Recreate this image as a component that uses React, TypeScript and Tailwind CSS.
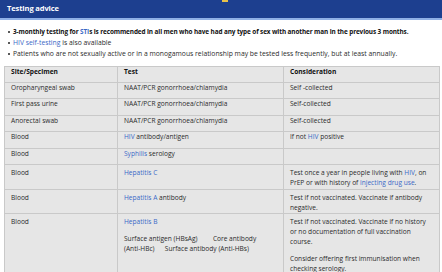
import React from "react";

const L = ({ children }: { children: React.ReactNode }) => (
  <span className="text-[#3b69c6]">{children}</span>
);

const Cell = ({ children, className = "" }: { children?: React.ReactNode; className?: string }) => (
  <td className={`border border-[#c9c9c9] px-[6px] align-top ${className}`}>{children}</td>
);

export default function App() {
  return (
    <div className="w-[442px] h-[272px] overflow-hidden bg-white text-[#2b2b2b]" style={{ fontFamily: '"Open Sans", "Noto Sans", sans-serif' }}>
      <div className="h-[20px] bg-[#1d3f8f] border-b-[2px] border-[#8fb0e6] flex items-center px-[7px] relative">
        <span className="text-white font-bold text-[7.5px] tracking-[-0.1px]">Testing advice</span>
        <div className="absolute top-0 left-[222px] w-[6px] h-[2px] bg-[#e8c24a]" />
      </div>
      <ul className="mt-[6px] pl-[8px] text-[6.8px] leading-[11px] whitespace-nowrap">
        <li className="flex items-center gap-[3px]">
          <span className="w-[2px] h-[2px] rounded-full bg-[#222] shrink-0" />
          <span className="font-bold text-[#111] text-[6.4px] tracking-[-0.1px]">3-monthly testing for <L>STI</L>s is recommended in all men who have had any type of sex with another man in the previous 3 months.</span>
        </li>
        <li className="flex items-center gap-[3px]">
          <span className="w-[2px] h-[2px] rounded-full bg-[#222] shrink-0" />
          <span><L>HIV self-testing</L> is also available</span>
        </li>
        <li className="flex items-center gap-[3px]">
          <span className="w-[2px] h-[2px] rounded-full bg-[#222] shrink-0" />
          <span>Patients who are not sexually active or in a monogamous relationship may be tested less frequently, but at least annually.</span>
        </li>
      </ul>
      <div className="pl-[4px] pr-[2px] mt-[7px]">
        <table className="w-[436px] border-collapse bg-[#e6e6e6] text-[6.6px] leading-[10px] table-fixed">
          <colgroup>
            <col className="w-[113px]" />
            <col className="w-[166px]" />
            <col />
          </colgroup>
          <tbody>
            <tr className="h-[16px] font-bold text-[#111]">
              <Cell className="align-middle">Site/Specimen</Cell>
              <Cell className="align-middle">Test</Cell>
              <Cell className="align-middle">Consideration</Cell>
            </tr>
            <tr className="h-[16px]">
              <Cell className="align-middle">Oropharyngeal swab</Cell>
              <Cell className="align-middle">NAAT/PCR gonorrhoea/chlamydia</Cell>
              <Cell className="align-middle">Self -collected</Cell>
            </tr>
            <tr className="h-[17px]">
              <Cell className="align-middle">First pass urine</Cell>
              <Cell className="align-middle">NAAT/PCR gonorrhoea/chlamydia</Cell>
              <Cell className="align-middle">Self-collected</Cell>
            </tr>
            <tr className="h-[16px]">
              <Cell className="align-middle">Anorectal swab</Cell>
              <Cell className="align-middle">NAAT/PCR gonorrhoea/chlamydia</Cell>
              <Cell className="align-middle">Self-collected</Cell>
            </tr>
            <tr className="h-[17px]">
              <Cell className="align-middle">Blood</Cell>
              <Cell className="align-middle"><L>HIV</L> antibody/antigen</Cell>
              <Cell className="align-middle">If not <L>HIV</L> positive</Cell>
            </tr>
            <tr className="h-[16px]">
              <Cell className="align-middle">Blood</Cell>
              <Cell className="align-middle"><L>Syphilis</L> serology</Cell>
              <Cell />
            </tr>
            <tr className="h-[25px]">
              <Cell className="pt-[3px]">Blood</Cell>
              <Cell className="pt-[3px]"><L>Hepatitis C</L></Cell>
              <Cell className="pt-[3px]">Test once a year in people living with <L>HIV</L>, on PrEP or with history of <L>injecting drug use</L>.</Cell>
            </tr>
            <tr className="h-[24px]">
              <Cell className="pt-[3px]">Blood</Cell>
              <Cell className="pt-[3px]"><L>Hepatitis A</L> antibody</Cell>
              <Cell className="pt-[3px]">Test if not vaccinated. Vaccinate if antibody negative.</Cell>
            </tr>
            <tr className="h-[62px]">
              <Cell className="pt-[3px]">Blood</Cell>
              <Cell className="pt-[3px]">
                <div><L>Hepatitis B</L></div>
                <div className="mt-[7px] whitespace-pre">{"Surface antigen (HBsAg)         Core antibody\n(Anti-HBc)      Surface antibody (Anti-HBs)"}</div>
              </Cell>
              <Cell className="pt-[3px]">
                <div>Test if not vaccinated. Vaccinate if no history or no documentation of full vaccination course.</div>
                <div className="mt-[7px]">Consider offering first immunisation when checking serology.</div>
              </Cell>
            </tr>
          </tbody>
        </table>
      </div>
    </div>
  );
}
